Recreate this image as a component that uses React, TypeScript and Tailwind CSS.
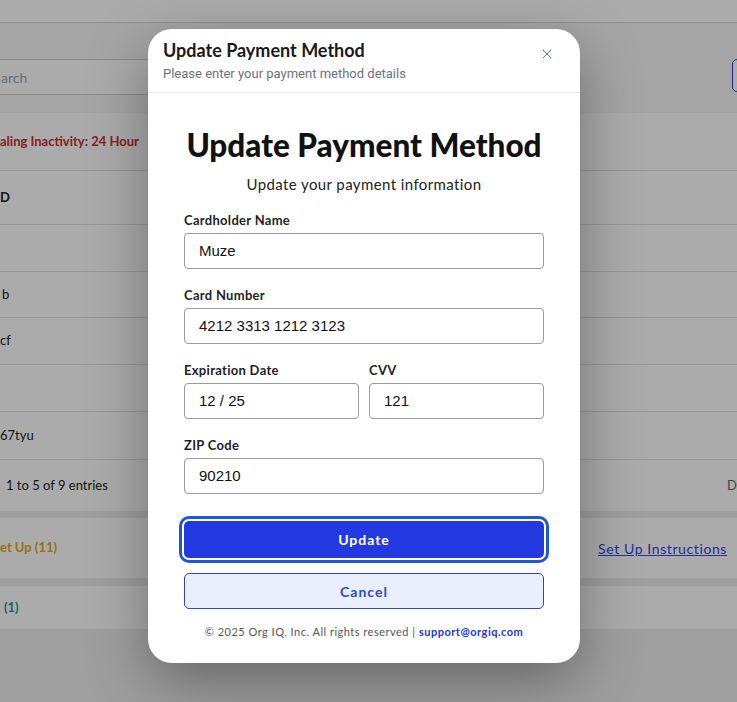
import { X } from "lucide-react";

const font = { fontFamily: "Lato, 'Noto Sans', sans-serif" };

function Field({ label, value }: { label: string; value: string }) {
  return (
    <div className="flex flex-col gap-[4px]">
      <label className="text-[13px] leading-[18px] font-bold text-[#1f1f1f] tracking-[0.3px]">{label}</label>
      <div className="h-[36px] border border-[#9a9a9a] rounded-[4px] flex items-center pl-[14px] text-[15px] text-[#111] font-['Liberation_Sans',Arial,sans-serif]">
        {value}
      </div>
    </div>
  );
}

function Background() {
  return (
    <div className="w-[737px] h-[702px] overflow-hidden bg-[#eeeeee] text-[13px] text-[#222]" style={font}>
      <div className="h-[23px] bg-white border-b border-[#d8d8d8]" />
      <div className="h-[90px] bg-[#f6f6f6] flex items-start justify-between pt-[36px]">
        <div className="-ml-[40px] w-[240px] h-[36px] border border-[#cfcfcf] rounded-[4px] bg-white flex items-center pl-[40px] text-[14px] text-[#9ca3af]">
          arch
        </div>
        <div className="-mr-[40px] w-[45px] h-[33px] border border-[#2f3fc8] rounded-[5px] bg-white" />
      </div>

      <div className="bg-white">
        <div className="h-[58px] flex items-center border-b border-[#e2e2e2] font-bold text-[#c53030]">
          aling Inactivity: 24 Hour
        </div>
        <div className="h-[54px] flex items-center border-b border-[#e2e2e2] font-bold">D</div>
        <div className="h-[47px] border-b border-[#e2e2e2]" />
        <div className="h-[46px] flex items-center border-b border-[#e2e2e2] pl-[2px]">b</div>
        <div className="h-[47px] flex items-center border-b border-[#e2e2e2]">cf</div>
        <div className="h-[47px] border-b border-[#e2e2e2]" />
        <div className="h-[48px] flex items-center border-b border-[#e2e2e2]">67tyu</div>
        <div className="h-[51px] flex items-center justify-between pl-[6px]">
          <span>1 to 5 of 9 entries</span>
          <span className="text-[#666]">D</span>
        </div>
      </div>

      <div className="h-[60px] mt-[7px] bg-white flex items-center justify-between pr-[10px]">
        <span className="font-bold text-[#e0a91a]">et Up (11)</span>
        <span className="text-[14px] text-[#3347e0] underline tracking-[0.6px]">Set Up Instructions</span>
      </div>

      <div className="h-[43px] mt-[8px] bg-white flex items-center pl-[4px] font-bold text-[#1f9a80]">(1)</div>
    </div>
  );
}

export default function App() {
  return (
    <div className="relative w-[737px] h-[702px] overflow-hidden">
      <Background />
      <div className="absolute inset-0 bg-black/[0.33]" />

      <div
        className="absolute left-[148px] top-[29px] w-[432px] bg-white rounded-[24px] shadow-[0_20px_60px_rgba(0,0,0,0.35)] overflow-hidden"
        style={font}
      >
        <div className="relative px-[15px] pt-[9px] pb-[8px] border-b border-[#e5e7eb]">
          <h2 className="text-[18px] leading-[24px] font-bold text-[#1a1a1a]">Update Payment Method</h2>
          <p className="mt-[2px] text-[13px] leading-[20px] text-[#6b7280] font-['Roboto',sans-serif]">
            Please enter your payment method details
          </p>
          <button className="absolute right-[25px] top-[17px] text-[#6b7280]">
            <X size={16} strokeWidth={1.5} />
          </button>
        </div>

        <div className="px-[36px] pt-[34px] pb-[23px]">
          <h1 className="text-center text-[31.5px] leading-[36px] font-black text-[#111] whitespace-nowrap">Update Payment Method</h1>
          <p className="mt-[11px] text-center text-[15px] leading-[20px] text-[#222] tracking-[0.4px]">Update your payment information</p>

          <div className="mt-[17px] flex flex-col gap-[17px]">
            <Field label="Cardholder Name" value="Muze" />
            <Field label="Card Number" value="4212 3313 1212 3123" />
            <div className="grid grid-cols-2 gap-[10px]">
              <Field label="Expiration Date" value="12 / 25" />
              <Field label="CVV" value="121" />
            </div>
            <Field label="ZIP Code" value="90210" />
          </div>

          <button className="mt-[27px] w-full h-[37px] rounded-[5px] bg-[#2438e0] text-white text-[14px] font-bold tracking-[1px] ring-[3px] ring-[#1f58d2] ring-offset-2">
            Update
          </button>
          <button className="mt-[15px] w-full h-[36px] rounded-[5px] bg-[#e9effc] border border-[#2a44d8] text-[#2f46d6] text-[14px] font-bold tracking-[1px]">
            Cancel
          </button>

          <p className="mt-[15px] text-center text-[11px] leading-[16px] text-[#555] tracking-[0.5px]">
            © 2025 Org IQ, Inc. All rights reserved |{" "}
            <span className="text-[#2336d6] font-bold">support@orgiq.com</span>
          </p>
        </div>
      </div>
    </div>
  );
}
